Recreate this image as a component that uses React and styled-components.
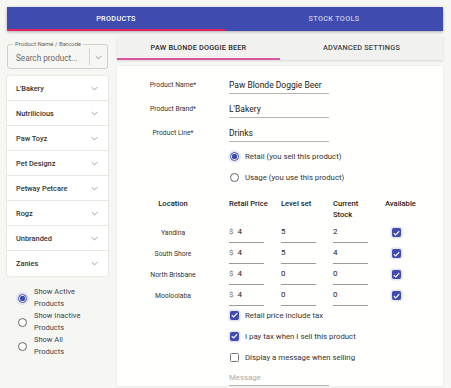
import React, { useState } from "react";
import styled, { createGlobalStyle } from "styled-components";

const GlobalStyle = createGlobalStyle`
  html, body {
    margin: 0;
    padding: 0;
    background: #f6f6f3;
    font-family: Roboto, "Liberation Sans", sans-serif;
    color: #222;
  }
  ::-webkit-scrollbar {
    width: 6px;
  }
  ::-webkit-scrollbar-track {
    background: #efefec;
  }
  ::-webkit-scrollbar-thumb {
    background: #c2c2bf;
  }
`;

const brands = [
  "L'Bakery",
  "Nutrilicious",
  "Paw Toyz",
  "Pet Designz",
  "Petway Petcare",
  "Rogz",
  "Unbranded",
  "Zanies",
];

const stock = [
  { location: "Yandina", price: "4", level: "5", current: "2" },
  { location: "South Shore", price: "4", level: "5", current: "4" },
  { location: "North Brisbane", price: "4", level: "0", current: "0" },
  { location: "Mooloolaba", price: "4", level: "0", current: "0" },
];

const Chevron = () => (
  <svg width="7" height="5" viewBox="0 0 10 6" fill="none">
    <path d="M1 1l4 4 4-4" stroke="#8a8a8a" strokeWidth="1.2" />
  </svg>
);

const Tick = () => (
  <svg width="7" height="6" viewBox="0 0 10 8" fill="none">
    <path d="M1 4.2l2.8 2.6L9 1.2" stroke="#fff" strokeWidth="1.6" />
  </svg>
);

const App = () => {
  const [filter, setFilter] = useState("active");
  const [usage, setUsage] = useState("retail");

  return (
    <Page>
      <GlobalStyle />
      <TopBar>
        <TopTab active>PRODUCTS</TopTab>
        <TopTab>STOCK TOOLS</TopTab>
      </TopBar>

      <Body>
        <Side>
          <SearchField>
            <FieldLegend>Product Name / Barcode</FieldLegend>
            <SearchText>Search product...</SearchText>
            <SearchDivider />
            <SearchArrow>
              <Chevron />
            </SearchArrow>
          </SearchField>

          <BrandList>
            {brands.map((b) => (
              <BrandRow key={b}>
                <span>{b}</span>
                <Chevron />
              </BrandRow>
            ))}
          </BrandList>

          <FilterGroup>
            {[
              ["active", "Show Active", "Products"],
              ["inactive", "Show Inactive", "Products"],
              ["all", "Show All", "Products"],
            ].map(([key, a, b]) => (
              <FilterItem key={key} onClick={() => setFilter(key)}>
                <Radio checked={filter === key} />
                <span>
                  {a}
                  <br />
                  {b}
                </span>
              </FilterItem>
            ))}
          </FilterGroup>
        </Side>

        <Main>
          <SubTabs>
            <SubTab active>PAW BLONDE DOGGIE BEER</SubTab>
            <SubTab>ADVANCED SETTINGS</SubTab>
          </SubTabs>

          <Card>
            <FormRow>
              <Label>Product Name*</Label>
              <TextValue>Paw Blonde Doggie Beer</TextValue>
            </FormRow>
            <FormRow>
              <Label>Product Brand*</Label>
              <TextValue>L'Bakery</TextValue>
            </FormRow>
            <FormRow>
              <Label>Product Line*</Label>
              <TextValue>Drinks</TextValue>
            </FormRow>

            <OptionList>
              <Option onClick={() => setUsage("retail")}>
                <Radio checked={usage === "retail"} />
                Retail (you sell this product)
              </Option>
              <Option onClick={() => setUsage("usage")}>
                <Radio checked={usage === "usage"} />
                Usage (you use this product)
              </Option>
            </OptionList>

            <StockTable>
              <HeadCell center>Location</HeadCell>
              <HeadCell>Retail Price</HeadCell>
              <HeadCell>Level set</HeadCell>
              <HeadCell>
                Current
                <br />
                Stock
              </HeadCell>
              <HeadCell>Available</HeadCell>
              {stock.map((r) => (
                <React.Fragment key={r.location}>
                  <LocCell>{r.location}</LocCell>
                  <NumInput>
                    <Dollar>$</Dollar>
                    {r.price}
                  </NumInput>
                  <NumInput>{r.level}</NumInput>
                  <NumInput>{r.current}</NumInput>
                  <CheckCell>
                    <Box checked>
                      <Tick />
                    </Box>
                  </CheckCell>
                </React.Fragment>
              ))}
            </StockTable>

            <OptionList tight>
              <Option>
                <Box checked>
                  <Tick />
                </Box>
                Retail price include tax
              </Option>
              <Option>
                <Box checked>
                  <Tick />
                </Box>
                I pay tax when I sell this product
              </Option>
              <Option>
                <Box />
                Display a message when selling
              </Option>
            </OptionList>

            <MessageField>Message</MessageField>
          </Card>
        </Main>
      </Body>
    </Page>
  );
};

const Page = styled.div`
  padding: 7px 8px 0 7px;
  min-height: 640px;
  box-sizing: border-box;
`;

const TopBar = styled.div`
  display: flex;
  height: 24px;
  background: #3f4bae;
  box-shadow: 0 1px 3px rgba(0, 0, 0, 0.3);
`;

const TopTab = styled.div`
  flex: 1;
  display: flex;
  align-items: center;
  justify-content: center;
  font-size: 7.3px;
  font-weight: 500;
  letter-spacing: 0.3px;
  color: ${(p) => (p.active ? "#fff" : "rgba(255,255,255,0.72)")};
  border-bottom: 2px solid ${(p) => (p.active ? "#e0245e" : "transparent")};
  box-sizing: border-box;
  padding-top: 1px;
`;

const Body = styled.div`
  display: flex;
  gap: 9px;
  margin-top: 5px;
`;

const Side = styled.div`
  width: 101px;
  flex-shrink: 0;
  padding-top: 8px;
`;

const SearchField = styled.div`
  position: relative;
  height: 25px;
  border: 1px solid #cfcfcc;
  border-radius: 3px;
  display: flex;
  align-items: center;
  box-sizing: border-box;
`;

const FieldLegend = styled.span`
  position: absolute;
  top: -5px;
  left: 5px;
  padding: 0 2px;
  font-size: 6px;
  color: #666;
  background: #f6f6f3;
  line-height: 8px;
`;

const SearchText = styled.span`
  flex: 1;
  padding-left: 8px;
  font-size: 8.2px;
  color: #6a6a6a;
  padding-top: 2px;
`;

const SearchDivider = styled.span`
  width: 1px;
  height: 17px;
  background: #d3d3d0;
`;

const SearchArrow = styled.span`
  width: 17px;
  display: flex;
  justify-content: center;
  padding-top: 1px;
`;

const BrandList = styled.div`
  margin-top: 7px;
  background: #fff;
  box-shadow: 0 0 2px rgba(0, 0, 0, 0.2);
  border-radius: 2px;
`;

const BrandRow = styled.div`
  height: 25px;
  display: flex;
  align-items: center;
  justify-content: space-between;
  padding: 0 10px 0 9px;
  border-bottom: 1px solid #e8e8e5;
  font-size: 7.4px;
  font-weight: 500;
  color: #333;
  box-sizing: border-box;

  &:last-child {
    border-bottom: none;
  }
`;

const FilterGroup = styled.div`
  margin-top: 10px;
  padding-left: 11px;
  display: flex;
  flex-direction: column;
`;

const FilterItem = styled.div`
  display: flex;
  align-items: center;
  gap: 7px;
  font-size: 7.5px;
  line-height: 12px;
  color: #444;
  cursor: pointer;
`;

const Radio = styled.span`
  width: 9px;
  height: 9px;
  flex-shrink: 0;
  border-radius: 50%;
  box-sizing: border-box;
  border: 1px solid ${(p) => (p.checked ? "#3f4bae" : "#666")};
  background: ${(p) =>
    p.checked
      ? "radial-gradient(circle, #3f4bae 0 2.6px, #fff 3px)"
      : "#fff"};
  box-shadow: ${(p) => (p.checked ? "0 0 0 2px rgba(63,75,174,0.12)" : "none")};
`;

const Main = styled.div`
  flex: 1;
  display: flex;
  flex-direction: column;
`;

const SubTabs = styled.div`
  display: flex;
  height: 24px;
  background: #f1f1ef;
  box-shadow: 0 1px 2px rgba(0, 0, 0, 0.12);
`;

const SubTab = styled.div`
  flex: 1;
  display: flex;
  align-items: center;
  justify-content: center;
  font-size: 7.3px;
  font-weight: 500;
  letter-spacing: 0.2px;
  color: ${(p) => (p.active ? "#2a2a2a" : "#444")};
  border-bottom: 2px solid ${(p) => (p.active ? "#d9569f" : "transparent")};
  box-sizing: border-box;
  padding-top: 1px;
`;

const Card = styled.div`
  margin-top: 6px;
  background: #fffffd;
  box-shadow: 0 0 2px rgba(0, 0, 0, 0.1);
  padding: 7px 0 0;
  flex: 1;
`;

const FormRow = styled.div`
  display: grid;
  grid-template-columns: 112px 100px;
  align-items: center;
  height: 24px;
`;

const Label = styled.div`
  font-size: 6.8px;
  color: #333;
  text-align: center;
`;

const TextValue = styled.div`
  font-size: 8.5px;
  color: #222;
  border-bottom: 1px solid #b5b5b2;
  padding: 3px 0 3px;
  margin-top: 1px;
`;

const OptionList = styled.div`
  margin-left: 112px;
  margin-top: ${(p) => (p.tight ? "-1px" : "5px")};
  display: flex;
  flex-direction: column;
  gap: 9px;
`;

const Option = styled.div`
  display: flex;
  align-items: center;
  gap: 6px;
  font-size: 7.8px;
  color: #333;
  height: 12px;
  padding-left: 1px;
  cursor: pointer;
`;

const StockTable = styled.div`
  display: grid;
  grid-template-columns: 112px 52px 52px 52px 48px;
  margin-top: 15px;
  align-items: start;
`;

const HeadCell = styled.div`
  font-size: 7.6px;
  font-weight: 500;
  line-height: 11px;
  color: #222;
  text-align: ${(p) => (p.center ? "center" : "left")};
  height: 28px;
`;

const LocCell = styled.div`
  font-size: 6.8px;
  color: #333;
  text-align: center;
  height: 21px;
  padding-top: 3px;
  box-sizing: border-box;
`;

const NumInput = styled.div`
  width: 35px;
  font-size: 8px;
  color: #222;
  border-bottom: 1px solid #9a9a98;
  padding: 1px 0 3px;
  height: 17px;
  box-sizing: border-box;
`;

const Dollar = styled.span`
  color: #777;
  margin-right: 4px;
`;

const CheckCell = styled.div`
  display: flex;
  padding: 2px 0 0 7px;
`;

const Box = styled.span`
  width: 9px;
  height: 9px;
  flex-shrink: 0;
  border-radius: 1.5px;
  box-sizing: border-box;
  display: inline-flex;
  align-items: center;
  justify-content: center;
  background: ${(p) => (p.checked ? "#3f4bae" : "#fff")};
  border: 1px solid ${(p) => (p.checked ? "#3f4bae" : "#777")};
  box-shadow: ${(p) => (p.checked ? "0 0 0 1.5px rgba(63,75,174,0.15)" : "none")};
`;

const MessageField = styled.div`
  margin: 10px 0 0 112px;
  width: 100px;
  font-size: 7.8px;
  color: #aaa;
  border-bottom: 1px solid #b5b5b2;
  padding-bottom: 3px;
`;

export default App;
